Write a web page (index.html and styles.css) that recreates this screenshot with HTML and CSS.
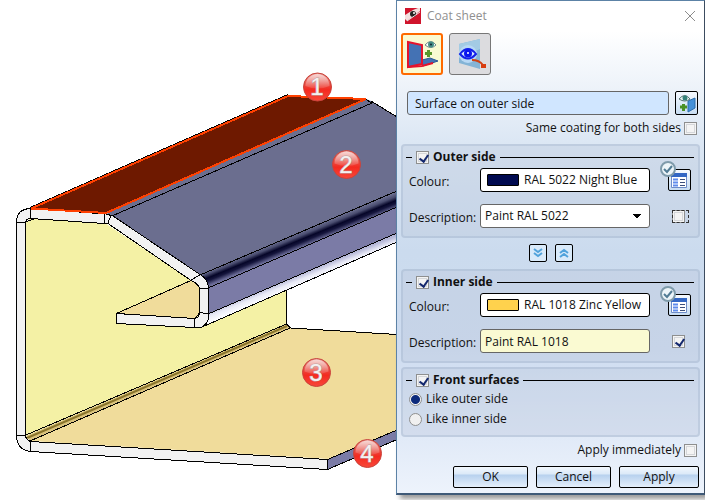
FILE: index.html
```html
<!DOCTYPE html>
<html lang="en">
<head>
    <meta charset="UTF-8">
    <meta name="viewport" content="width=device-width, initial-scale=1.0">
    <title>Coat sheet</title>
    <link rel="stylesheet" href="styles.css">
</head>
<body>
    <main class="workspace">
        <svg class="scene" viewBox="0 0 396 500" role="img" aria-label="Sheet metal profile">
            <defs>
                <linearGradient id="ball" x1="0" y1="0" x2="0" y2="1">
                    <stop offset="0" stop-color="#e8968f"/>
                    <stop offset="0.4" stop-color="#ea4a40"/>
                    <stop offset="0.6" stop-color="#f42a20"/>
                    <stop offset="1" stop-color="#f8483a"/>
                </linearGradient>
                <linearGradient id="gloss" x1="0" y1="0" x2="0" y2="1">
                    <stop offset="0" stop-color="#fff" stop-opacity="0.65"/>
                    <stop offset="1" stop-color="#fff" stop-opacity="0.1"/>
                </linearGradient>
                <linearGradient id="bend" gradientUnits="userSpaceOnUse" x1="300" y1="232" x2="307" y2="249">
                    <stop offset="0" stop-color="#6b6e8f"/>
                    <stop offset="0.2" stop-color="#4a4d70"/>
                    <stop offset="0.4" stop-color="#050528"/>
                    <stop offset="0.55" stop-color="#15153c"/>
                    <stop offset="0.8" stop-color="#6a6b96"/>
                    <stop offset="1" stop-color="#7b7ba6"/>
                </linearGradient>
                <linearGradient id="lip" gradientUnits="userSpaceOnUse" x1="300" y1="274" x2="304" y2="284">
                    <stop offset="0" stop-color="#b4b6d6"/>
                    <stop offset="0.5" stop-color="#e9eaf6"/>
                    <stop offset="1" stop-color="#fbfbff"/>
                </linearGradient>
                <g id="marker">
                    <circle r="14" fill="url(#ball)" stroke="#c8443c"/>
                    <path d="M-12-1A12 12 0 0 1 12-1Q0 4-12-1Z" fill="url(#gloss)"/>
                </g>
            </defs>

            <!-- inner faces -->
            <path class="yellow" d="M26 222L31 218L105 223L191 280L209 320L287 289V325L26 436Z"/>
            <path class="tan" d="M30 441L287 325L290 328L397 334V430L328 459Z"/>
            <path d="M26 436L287 324L290 328L30 441Z" fill="#d9c27d"/>
            <path d="M27 438L287 326" stroke="#8a752c" stroke-width="2"/>
            <path class="edge" d="M286.5 289V324L290.5 328L397 334.5M26 435L286.5 324M30 441L290 328"/>
            <path class="tan edge" d="M116.5 313.5L192 280L199.5 286V313L195 318.5Z"/>

            <!-- outer faces -->
            <path class="slate" d="M106 213L366 99L371 101L397 117V192L208 280L200 275L113 216Z"/>
            <path d="M202 275L397 191V207L208 288Z" fill="url(#bend)"/>
            <path d="M208 288L397 207V233L208 314Z" fill="#7b7ba6"/>
            <path d="M208 314L397 233V242L202 327Z" fill="url(#lip)"/>
            <path class="edge" d="M113 215.5L372 103L366 99.500M371 101L397 117M200 275L397 191M208 288L397 207M208 314L397 233M202 327L397 242"/>

            <!-- cut edges -->
            <path class="white edge" d="M30.500 208.500Q16.500 209 16.500 222.500V435.500Q17 450 30.500 451.500L327.500 469.500V459.500L30.500 441.500Q26 440 25.500 435.500V222.500Q26 218.500 30.500 218.500L104.500 223.500L108 223.500L191 280.500Q199.500 284 199.500 290V313Q199 318 194.500 318.500L116.500 313.500V323.500L194.500 327.500H201Q208.500 324 208.500 316V288Q208 279 200 274.500L113 216L106 214Z"/>
            <path class="edge" d="M30.500 209V218.500M16.500 222.500H26M25.500 222L35 218.500M104.500 214V223.500M111 215L108 223M191 280L200 275M199.500 288.500H208.500M199.500 312.500L208.500 314M194.500 318.500V327.500M16.500 435.500H26M30.500 441.500V451"/>
            <path class="lavender edge" d="M327.500 459.500L397 430V439.500L327.500 469.500Z"/>

            <!-- selected face -->
            <path class="edge" d="M30 207.500L288 94.500"/>
            <path class="selected" d="M31 208.500L288 96L366 99L106 213Z"/>

            <g class="markers">
                <use href="#marker" x="317.500" y="87"/>
                <text x="317" y="95">1</text>
                <use href="#marker" x="346.500" y="164.500"/>
                <text x="346" y="173">2</text>
                <use href="#marker" x="316.500" y="372.500"/>
                <text x="316" y="381">3</text>
                <use href="#marker" x="367.500" y="453.500"/>
                <text x="367" y="462">4</text>
            </g>
        </svg>

        <form class="dialog">
            <header class="titlebar">
                <svg width="16" height="16" viewBox="0 0 16 16" aria-hidden="true">
                    <path d="M0 0H16V16H0Z" fill="#d0142c"/>
                    <path d="M0 0H15L15 3L2 13L0 11Z" fill="#f3dede"/>
                    <path d="M0 0H13L8 2L0 7Z" fill="#d0142c"/>
                    <circle cx="8" cy="6" r="3" fill="#222"/>
                    <circle cx="9" cy="5" r="1" fill="#fff"/>
                    <path d="M2 13L15 4" stroke="#e8e0e0"/>
                </svg>
                <h1>Coat sheet</h1>
                <button type="button" class="close" aria-label="Close">
                    <svg width="12" height="12" viewBox="0 0 12 12"><path d="M1 1L11 11M11 1L1 11" stroke="#8c8c8c"/></svg>
                </button>
            </header>

            <div class="modes">
                <button type="button" class="mode active" aria-label="Coat surface">
                    <svg width="36" height="36" viewBox="0 0 36 36">
                        <path d="M18 24L26 22L34 25L19 30Z" fill="#4472b4" stroke="#2c5894"/>
                        <path d="M4 6L18 9V28L4 31Z" fill="#4472b4" stroke="#e5142c" stroke-width="2"/>
                        <path d="M4 31L18 30L29 27" fill="none" stroke="#e5142c" stroke-width="2"/>
                        <path d="M21 9Q27 2 32 9Q27 14 21 9Z" fill="#fff" stroke="#6d8787"/>
                        <circle cx="27" cy="8.500" r="3" fill="#458d86"/>
                        <circle cx="27" cy="8.500" r="1" fill="#123"/>
                        <path d="M21 17.500H28M24.500 14V21" stroke="#5a972b" stroke-width="3"/>
                    </svg>
                </button>
                <button type="button" class="mode" aria-label="Show coating">
                    <svg width="36" height="36" viewBox="0 0 36 36">
                        <path d="M7 8L28 3V33L7 27Z" fill="#84b4d6"/>
                        <path d="M7 8L28 3V13L7 22Z" fill="#a3cbe4"/>
                        <circle cx="16" cy="18" r="9" fill="#b8d8f4"/>
                        <path d="M8 18Q16 8 24 18Q16 27 8 18Z" fill="#d5e7ff" stroke="#1220e8" stroke-width="2"/>
                        <circle cx="16" cy="17.500" r="4" fill="#0a16ef"/>
                        <circle cx="16" cy="17" r="1" fill="#fff"/>
                        <path d="M20 24Q27 24 31 29" fill="none" stroke="#cf4215" stroke-width="2"/>
                        <path d="M29 28H34V32H29Z" fill="#d93d10"/>
                    </svg>
                </button>
            </div>

            <div class="picker">
                <input class="field picked" type="text" value="Surface on outer side" aria-label="Surface" readonly>
                <button type="button" class="tool" aria-label="Select surface">
                    <svg width="20" height="20" viewBox="0 0 20 20">
                        <path d="M11 8L18 5V15L11 19Z" fill="#4591d8" stroke="#2a6cab"/>
                        <path d="M2 6Q8-1 13 6Q8 10 2 6Z" fill="#eef8f4" stroke="#52726f"/>
                        <circle cx="8" cy="5" r="2.500" fill="#36827a"/>
                        <path d="M3 14H10M6.500 11V18" stroke="#4b9126" stroke-width="3"/>
                    </svg>
                </button>
            </div>

            <label class="trailing">Same coating for both sides <input type="checkbox"></label>

            <section class="group">
                <div class="heading"><label><input type="checkbox" checked>Outer side</label></div>
                <div class="row">
                    <label for="outer-colour">Colour:</label>
                    <button type="button" class="field colour" id="outer-colour"><span class="swatch night-blue"></span>RAL 5022 Night Blue</button>
                    <button type="button" class="tool list" aria-label="Choose outer colour">
                        <svg width="32" height="32" viewBox="0 0 32 32"><use href="#table-icon"/></svg>
                    </button>
                </div>
                <div class="row">
                    <label for="outer-text">Description:</label>
                    <select class="field" id="outer-text"><option>Paint RAL 5022</option></select>
                    <span class="toggle focused"><input type="checkbox" aria-label="Use own outer description"></span>
                </div>
            </section>

            <div class="transfer">
                <button type="button" aria-label="Copy down">
                    <svg width="12" height="12" viewBox="0 0 12 12"><path d="M2 2L6 5L10 2M2 6L6 9L10 6"/></svg>
                </button>
                <button type="button" aria-label="Copy up">
                    <svg width="12" height="12" viewBox="0 0 12 12"><path d="M2 6L6 3L10 6M2 10L6 7L10 10"/></svg>
                </button>
            </div>

            <section class="group">
                <div class="heading"><label><input type="checkbox" checked>Inner side</label></div>
                <div class="row">
                    <label for="inner-colour">Colour:</label>
                    <button type="button" class="field colour" id="inner-colour"><span class="swatch zinc-yellow"></span>RAL 1018 Zinc Yellow</button>
                    <button type="button" class="tool list" aria-label="Choose inner colour">
                        <svg width="32" height="32" viewBox="0 0 32 32">
                            <g id="table-icon">
                                <path d="M12.500 13.500H27.500V27.500H12.500Z" fill="#fff" stroke="#6d8cc8"/>
                                <path d="M12 13H28V17H12Z" fill="#3367c4"/>
                                <path d="M14 19.500H19M14 22.500H19M14 25.500H19" stroke="#5f8cec" stroke-width="2"/>
                                <path d="M21 19.500H26M21 22.500H26M21 25.500H26" stroke="#3c4f7c"/>
                                <circle cx="9" cy="9" r="7" fill="#edf5f9" stroke="#7f9bab" stroke-width="2"/>
                                <path d="M5 9L8 12L13 6" fill="none" stroke="#527c95" stroke-width="2"/>
                            </g>
                        </svg>
                    </button>
                </div>
                <div class="row">
                    <label for="inner-text">Description:</label>
                    <input class="field edited" type="text" id="inner-text" value="Paint RAL 1018">
                    <span class="toggle"><input type="checkbox" checked aria-label="Use own inner description"></span>
                </div>
            </section>

            <section class="group last">
                <div class="heading"><label><input type="checkbox" checked>Front surfaces</label></div>
                <label class="option"><input type="radio" name="front" checked>Like outer side</label>
                <label class="option"><input type="radio" name="front">Like inner side</label>
            </section>

            <label class="trailing">Apply immediately <input type="checkbox"></label>

            <footer class="actions">
                <button type="button">OK</button>
                <button type="button">Cancel</button>
                <button type="button">Apply</button>
            </footer>
        </form>
    </main>
</body>
</html>
```
FILE: styles.css
```css
* {
    box-sizing: border-box;
}

body {
    margin: 0;
    background: white;
    color: #111;
    font-family: 'Open Sans', 'Noto Sans', sans-serif;
    font-size: 12px;
    line-height: 16px;
}

button, input, select {
    font: inherit;
    color: inherit;
    margin: 0;
}

button {
    display: flex;
    align-items: center;
    justify-content: center;
    padding: 0;
}

button svg {
    flex: none;
}

.workspace {
    display: flex;
    align-items: flex-start;
}

/* drawing */
.scene {
    flex: 1;
    min-width: 0;
}

.edge {
    stroke: #000;
    fill: none;
    shape-rendering: crispEdges;
}

.yellow { fill: #f4f1a5; }
.tan { fill: #f0dc9b; }
.slate { fill: #6b6e8f; }
.white { fill: #f2f2f2; }
.lavender { fill: #7b7ba6; }

.selected {
    fill: #6e1900;
    stroke: #ff4000;
    stroke-width: 2;
    shape-rendering: crispEdges;
}

.markers text {
    fill: #f4f0f0;
    stroke: #b9a5a5;
    stroke-width: 1;
    paint-order: stroke;
    font-family: 'Liberation Sans', sans-serif;
    font-size: 24px;
    text-anchor: middle;
}

/* dialog */
.dialog {
    flex: 0 0 309px;
    padding: 0 4px 5px;
    border: 1px solid #5c82a6;
    border-right-color: #3c4c60;
    border-bottom: 2px solid #3f5a78;
    background: linear-gradient(#fff 30px, #dce7f4 140px, #cbdbee 250px, #cedcf0 350px, #edf3fc);
    box-shadow: 4px 4px 5px rgba(0,0,0,0.4);
}

.titlebar {
    display: flex;
    align-items: center;
    gap: 6px;
    height: 30px;
    padding: 0 4px;
}

.titlebar h1 {
    flex: 1;
    margin: 0;
    color: #8f8f8f;
    font-size: 12px;
    font-weight: normal;
}

.close {
    border: none;
    background: none;
}

.modes {
    display: flex;
    gap: 6px;
    margin-top: 2px;
}

.mode {
    width: 42px;
    height: 42px;
    border: 1px solid #777;
    border-radius: 3px;
    background: #dcdcdf;
}

.mode.active {
    border: 2px solid #ff6a00;
    background: #fafad2;
}

.picker {
    display: flex;
    gap: 6px;
    margin: 16px 2px 0 6px;
}

.field {
    flex: 1;
    min-width: 0;
    height: 24px;
    padding: 0 4px;
    border: 1px solid #666;
    border-radius: 3px;
    background: white;
}

.picked {
    padding: 0 7px;
    background: #d0e6ff;
}

.edited {
    background: #fafad2;
}

.tool {
    width: 23px;
    height: 24px;
    border: 1px solid #000;
    border-radius: 2px;
    background: linear-gradient(#f6faff, #c8ddf2);
}

.trailing {
    display: flex;
    justify-content: flex-end;
    align-items: center;
    gap: 3px;
    margin: 5px 3px 8px;
}

input[type="checkbox"] {
    appearance: none;
    flex: none;
    width: 13px;
    height: 13px;
    border: 1px solid #8e8f8f;
    background: #f4f4f4;
    box-shadow: inset 0 0 0 1px #f4f4f4, inset 0 0 0 2px #d5d7da;
}

input[type="checkbox"]:checked::before {
    content: "";
    display: block;
    width: 4px;
    height: 7px;
    margin: 1px 0 0 4px;
    border: solid #14286e;
    border-width: 0 2px 2px 0;
    transform: rotate(35deg);
}

input[type="radio"] {
    appearance: none;
    flex: none;
    width: 13px;
    height: 13px;
    border: 1px solid #8e8f8f;
    border-radius: 50%;
    background: #f0f0f0;
}

input[type="radio"]:checked {
    background: radial-gradient(#0c2a7c 4px, #f4f4f4 5px);
}

.group {
    padding: 3px 4px 8px 6px;
    border: 2px solid rgba(150,170,195,0.3);
    border-radius: 4px;
    background: rgba(185,198,218,0.35);
}

.heading {
    display: flex;
    align-items: center;
    gap: 4px;
    height: 16px;
    margin: 0 0 3px -3px;
    font-weight: bold;
}

.heading::before,
.heading::after {
    content: "";
    width: 6px;
    height: 1px;
    background: #000;
}

.heading::after {
    flex: 1;
}

.heading label,
.option {
    display: flex;
    align-items: center;
    gap: 4px;
}

.row {
    display: grid;
    grid-template-columns: 71px 1fr 44px;
    align-items: center;
}

.row label {
    padding-top: 4px;
}

.row .field {
    width: 100%;
}

.row + .row {
    margin-top: 12px;
}

.toggle {
    display: flex;
    width: 17px;
    margin-left: 22px;
}

.focused {
    outline: 1px dashed #333;
    outline-offset: -1px;
}

.colour {
    gap: 5px;
    justify-content: flex-start;
    padding: 0 6px;
    border-color: #000;
    white-space: nowrap;
}

.swatch {
    width: 32px;
    height: 12px;
    border: 1px solid #000;
    border-radius: 1px;
}

.night-blue { background: #000a50; }
.zinc-yellow { background: #ffd24d; }

select.field {
    appearance: none;
    background: conic-gradient(from 315deg at 50% 100%, #000 90deg, transparent 0) no-repeat right 4px center / 8px 4px content-box, white;
}

.list {
    justify-self: end;
    margin-right: 3px;
    height: 22px;
}

.list svg {
    margin: -9px 0 0 -9px;
}

.transfer {
    display: flex;
    justify-content: center;
    gap: 8px;
    padding: 6px 0 7px;
}

.transfer button {
    width: 18px;
    height: 18px;
    border: 1px solid #000;
    border-radius: 2px;
    background: #d9eafa;
}

.transfer path {
    fill: none;
    stroke: #51a3dc;
    stroke-width: 2;
}

.last {
    margin-top: 4px;
}

.option + .option {
    margin-top: 4px;
}

.actions {
    display: grid;
    grid-template-columns: 75px 75px 80px;
    justify-content: end;
    gap: 8px;
    margin-right: 1px;
}

.actions button {
    height: 22px;
    border: 1px solid #000;
    border-radius: 2px;
    background: linear-gradient(#f2f7fd, #dbe9f8 35%, #b7d1ee 40%, #e4effb);
}
```
